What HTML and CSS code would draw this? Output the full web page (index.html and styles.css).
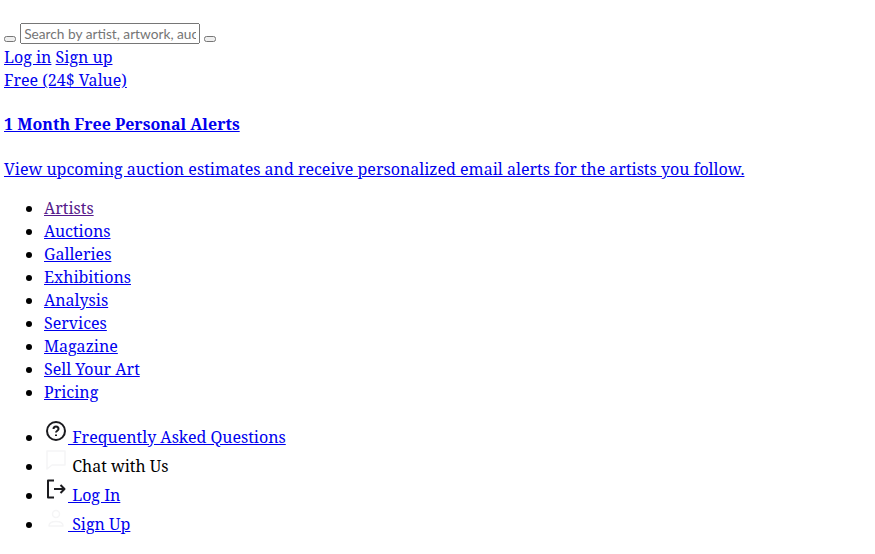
FILE: index.html
```html
<!DOCTYPE html>
<html lang="en">
<head>
  <meta charset="UTF-8">
  <title>Art Market</title>
  <link rel="stylesheet" href="styles.css">
</head>
<body>

  <form class="search">
    <button type="button"></button>
    <input type="text" placeholder="Search by artist, artwork, auction">
    <button type="button"></button>
  </form>

  <div>
    <a href="#">Log in</a>
    <a href="#">Sign up</a>
  </div>

  <a href="#" class="promo">
    <div>Free (24$ Value)</div>
    <h4>1 Month Free Personal Alerts</h4>
    <p>View upcoming auction estimates and receive personalized email alerts for the artists you follow.</p>
  </a>

  <ul>
    <li><a href="#" class="visited">Artists</a></li>
    <li><a href="#">Auctions</a></li>
    <li><a href="#">Galleries</a></li>
    <li><a href="#">Exhibitions</a></li>
    <li><a href="#">Analysis</a></li>
    <li><a href="#">Services</a></li>
    <li><a href="#">Magazine</a></li>
    <li><a href="#">Sell Your Art</a></li>
    <li><a href="#">Pricing</a></li>
  </ul>

  <ul>
    <li>
      <a href="#">
        <svg class="icon" viewBox="0 0 24 24" fill="none" stroke="#1b1b1f" stroke-width="2">
          <circle cx="12" cy="12" r="9"/>
          <path d="M9.5 10a2.5 2.5 0 0 1 5 0c0 1.700-2.500 1.800-2.500 3.500"/>
          <path d="M12 15.500v1.500"/>
        </svg>
        Frequently Asked Questions
      </a>
    </li>
    <li>
      <svg class="icon" viewBox="0 0 24 24" fill="none" stroke="#f5f5f6" stroke-width="1.5" stroke-linejoin="round">
        <path d="M3 3h18v14H8l-5 4z"/>
      </svg>
      Chat with Us
    </li>
    <li>
      <a href="#">
        <svg class="icon" viewBox="0 0 24 24" fill="none" stroke="#1b1b1f" stroke-width="2" stroke-linejoin="round">
          <path d="M10 3.500H4v17h6"/>
          <path d="M10 12h10M16.500 8l4 4-4 4"/>
        </svg>
        Log In
      </a>
    </li>
    <li>
      <a href="#">
        <svg class="icon" viewBox="0 0 24 24" fill="none" stroke="#f5f5f6" stroke-width="1.5" stroke-linejoin="round">
          <circle cx="12" cy="8" r="3.5"/>
          <path d="M5 20c0-3 3-4.500 7-4.500s7 1.500 7 4.500z"/>
        </svg>
        Sign Up
      </a>
    </li>
  </ul>

</body>
</html>
```

FILE: styles.css
```css
body {
  margin: 0;
  padding: 22px 4px 0;
  font-family: "Noto Serif", "DejaVu Serif", serif;
  line-height: 23px;
}

.search {
  height: 24px;
}

.search button {
  padding: 1px 4px;
}

.search input {
  width: 180px;
  height: 21px;
  box-sizing: border-box;
  font-family: Lato, sans-serif;
  font-size: 13.7px;
}

.promo {
  display: block;
}

.promo h4 {
  margin: 21px 0 22px;
}

.promo p {
  margin: 0;
}

ul {
  margin: 16px 0;
}

a.visited {
  color: #551a8b;
}

.icon {
  width: 24px;
  height: 24px;
  margin-top: -1px;
}
```
